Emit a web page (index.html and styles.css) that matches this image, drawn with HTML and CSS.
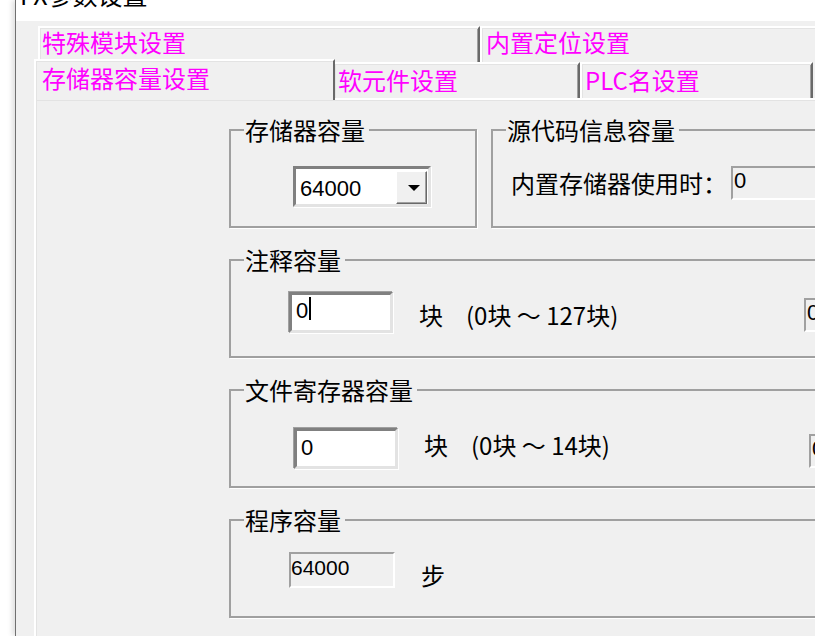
FILE: index.html
```html
<!DOCTYPE html>
<html lang="zh-CN">
<head>
    <meta charset="UTF-8">
    <meta name="viewport" content="width=device-width, initial-scale=1.0">
    <title>FX参数设置</title>
    <link rel="stylesheet" href="styles.css">
</head>
<body>
<div class="window">
    <div class="titlebar"><span class="title">FX参数设置</span></div>
    <div class="dialog">
        <div class="tab-row tab-row-back">
            <div class="tab tab-special">特殊模块设置</div>
            <div class="tab tab-position">内置定位设置</div>
        </div>
        <div class="tab-row tab-row-front">
            <div class="tab tab-memory active">存储器容量设置</div>
            <div class="tab tab-device">软元件设置</div>
            <div class="tab tab-plc">PLC名设置</div>
        </div>
        <div class="panel">
            <div class="group-row">
                <fieldset class="group group-memory">
                    <legend>存储器容量</legend>
                    <div class="combo">
                        <span class="combo-value">64000</span>
                        <span class="combo-btn">
                            <svg width="12" height="6" viewBox="0 0 12 6"><path d="M0 0h12L6 6z" fill="#000"/></svg>
                        </span>
                    </div>
                </fieldset>
                <fieldset class="group group-source">
                    <legend>源代码信息容量</legend>
                    <div class="field-row">
                        <span class="label">内置存储器使用时：</span>
                        <div class="edit-off edit-source">0</div>
                    </div>
                </fieldset>
            </div>
            <fieldset class="group group-wide group-comment">
                <legend>注释容量</legend>
                <div class="field-row">
                    <div class="edit"><span class="edit-text">0</span><span class="caret"></span></div>
                    <span class="unit">块</span>
                    <span class="range">(0块 ～ 127块)</span>
                    <div class="edit-off edit-side">0</div>
                </div>
            </fieldset>
            <fieldset class="group group-wide group-file">
                <legend>文件寄存器容量</legend>
                <div class="field-row">
                    <div class="edit"><span class="edit-text">0</span></div>
                    <span class="unit">块</span>
                    <span class="range">(0块 ～ 14块)</span>
                    <div class="edit-off edit-side">0</div>
                </div>
            </fieldset>
            <fieldset class="group group-wide group-program">
                <legend>程序容量</legend>
                <div class="field-row">
                    <div class="edit-off edit-program">64000</div>
                    <span class="unit">步</span>
                </div>
            </fieldset>
        </div>
    </div>
</div>
</body>
</html>
```
FILE: styles.css
```css
html, body {
    margin: 0;
    height: 100%;
    overflow: hidden;
}
body {
    background: #fff;
    font-family: "Noto Sans CJK SC", sans-serif;
    font-size: 24px;
    line-height: 24px;
    color: #000;
}
.window {
    margin-left: 15px;
    width: 1000px;
    height: 100%;
    border-left: 1px solid #707070;
    background: #f0f0f0;
    box-shadow: -3px 0 5px rgba(0, 0, 0, 0.12);
}
.titlebar {
    height: 21px;
    background: #fff;
    overflow: hidden;
    padding-left: 4px;
}
.title {
    display: block;
    font-size: 25px;
    line-height: 25px;
    margin-top: -18px;
}
.dialog {
    padding: 5px 0 0 18px;
}

/* tabs */
.tab-row {
    display: flex;
    height: 36px;
}
.tab-row-back { margin-left: 4px; }
.tab-row-front { padding-left: 2px; }
.tab {
    box-sizing: border-box;
    height: 36px;
    border-top: 2px solid #fff;
    border-left: 2px solid #fff;
    border-right: 2px solid #696969;
    box-shadow: inset 1px 1px 0 #e3e3e3, inset -1px 0 0 #a0a0a0;
    background: #f0f0f0;
    color: #ff00ff;
    white-space: nowrap;
    padding: 2px 0 0 2px;
}
.tab-special { width: 442px; }
.tab-position { width: 340px; padding-left: 4px; }
.tab-row-front .tab { padding: 4px 0 0 3px; }
.tab-device { width: 247px; }
.tab-plc { width: 233px; }
.tab-row-front .tab-memory {
    position: relative;
    z-index: 1;
    width: 301px;
    height: 41px;
    margin: -3px -2px 0 -2px;
    padding: 5px 0 0 6px;
    box-shadow: inset 1px 1px 0 #e3e3e3;
}

/* page */
.panel {
    height: 600px;
    border-top: 2px solid #fff;
    border-left: 2px solid #fff;
    box-shadow: inset 1px 1px 0 #e3e3e3;
    padding: 18px 0 0 193px;
}
.group-row {
    display: flex;
    gap: 14px;
}
.group {
    box-sizing: border-box;
    margin: 0;
    padding: 0;
    min-width: 0;
    border: 2px solid #a0a0a0;
    box-shadow: 1px 1px 0 #fff;
}
.group legend {
    margin-left: 13px;
    padding: 0 4px 0 1px;
    line-height: 24px;
    white-space: nowrap;
}
.group-memory { width: 248px; padding: 24px 0 19px; }
.group-memory .combo { margin-left: 62px; }
.group-source { width: 450px; padding-top: 24px; }
.group-source .field-row { margin-left: 18px; }
.group-wide { width: 700px; margin-top: 20px; }
.group-comment { padding: 20px 0 23px; }
.group-comment .field-row { margin-left: 58px; }
.group-file { padding: 26px 0 17px; }
.group-file .field-row { margin-left: 63px; }
.group-program { padding: 20px 0 28px; }
.group-program .field-row { margin-left: 58px; }

.field-row {
    display: flex;
    align-items: flex-start;
}

/* combo box */
.combo {
    box-sizing: border-box;
    display: flex;
    width: 138px;
    height: 41px;
    border: 3px solid;
    border-color: #808080 #e3e3e3 #e3e3e3 #808080;
    box-shadow: 1px 1px 0 #fff;
    background: #fff;
}
.combo-value {
    flex: 1;
    font-family: "Liberation Sans", sans-serif;
    font-size: 22px;
    line-height: 22px;
    padding: 9px 0 0 4px;
}
.combo-btn {
    box-sizing: border-box;
    display: flex;
    align-items: center;
    justify-content: center;
    width: 31px;
    height: 33px;
    margin: 2px 1px 0 0;
    padding-left: 4px;
    background: #f0f0f0;
    border: 1px solid;
    border-color: #fff #696969 #696969 #fff;
    box-shadow: inset -1px -1px 0 #a0a0a0;
}

/* edits */
.edit {
    box-sizing: border-box;
    display: flex;
    align-items: flex-start;
    flex-shrink: 0;
    width: 104px;
    height: 41px;
    border: 3px solid;
    border-color: #808080 #e3e3e3 #e3e3e3 #808080;
    box-shadow: -1px -1px 0 #a0a0a0, 1px 1px 0 #fff;
    background: #fff;
    padding: 5px 0 0 4px;
    font-family: "Liberation Sans", sans-serif;
    font-size: 22px;
    line-height: 22px;
}
.group-file .edit { padding-top: 6px; }
.caret {
    width: 2px;
    height: 23px;
    margin: -3px 0 0 1px;
    background: #000;
}
.edit-off {
    box-sizing: border-box;
    flex-shrink: 0;
    height: 34px;
    border: 2px solid;
    border-color: #a0a0a0 #fff #fff #a0a0a0;
    background: #f0f0f0;
    padding: 2px 0 0 1px;
    font-family: "Liberation Sans", sans-serif;
    font-size: 22px;
    line-height: 22px;
}
.edit-source { width: 200px; margin-left: 4px; }
.edit-side { width: 60px; margin-top: 6px; }
.edit-program {
    width: 106px;
    height: 36px;
    padding: 3px 0 0 0;
    font-size: 21px;
}

.label { margin-top: 5px; white-space: nowrap; flex-shrink: 0; }
.unit { margin: 11px 0 0 26px; flex-shrink: 0; }
.range { width: 338px; flex-shrink: 0; margin: 11px 0 0 23px; white-space: nowrap; }
.group-file .unit,
.group-file .range { margin-top: 5px; }
```
